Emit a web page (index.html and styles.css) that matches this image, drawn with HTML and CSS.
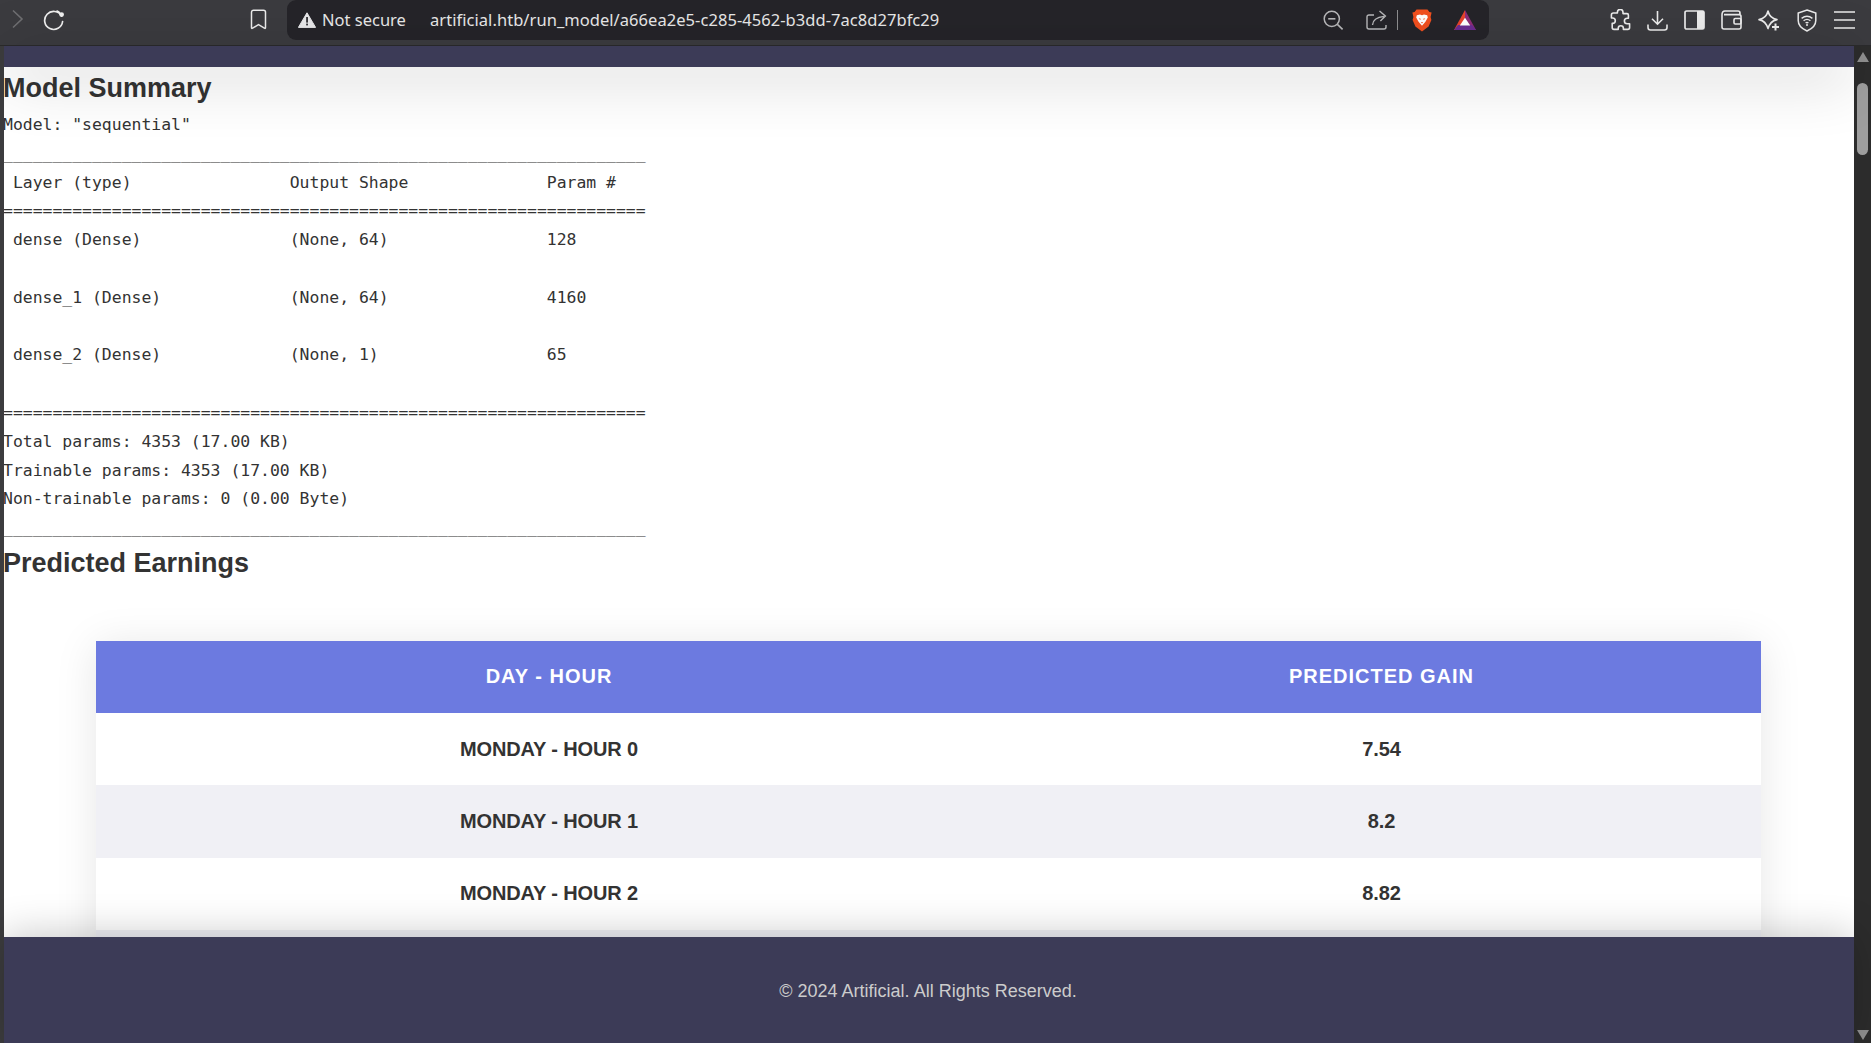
FILE: index.html
```html
<!DOCTYPE html>
<html lang="en">
<head>
<meta charset="utf-8">
<title>Artificial - Run Model</title>
<link rel="stylesheet" href="styles.css">
</head>
<body>
<div class="browser">
  <header class="toolbar">
    <div class="nav-buttons">
      <span class="tool-cell"><svg class="ico-fwd" width="14" height="20" viewBox="0 0 14 20"><path d="M2 1.5 L11 10 L2 18.5" fill="none" stroke="#6f6f72" stroke-width="1.6"/></svg></span>
      <span class="tool-cell"><svg width="24" height="24" viewBox="0 0 24 24"><path d="M19.6 9.2 A9 9 0 1 0 20.6 14.5" fill="none" stroke="#f0f0f0" stroke-width="1.7" stroke-linecap="round"/><path d="M14.5 3.8 A9 9 0 0 1 18 6" fill="none" stroke="#f0f0f0" stroke-width="1.7"/><circle cx="19.6" cy="7.6" r="2.4" fill="#f0f0f0"/></svg></span>
    </div>
    <span class="bookmark"><svg width="17" height="21" viewBox="0 0 17 21"><path d="M3.5 1.2 H13.5 A2 2 0 0 1 15.5 3.2 V18.6 Q15.5 19.8 14.4 19.2 L8.5 15.6 L2.6 19.2 Q1.5 19.8 1.5 18.6 V3.2 A2 2 0 0 1 3.5 1.2 Z" fill="none" stroke="#ececec" stroke-width="1.5"/></svg></span>
    <div class="urlbar">
      <svg class="warn" width="18" height="16" viewBox="0 0 18 16"><path d="M9 .8 L17.6 15.4 H.4 Z" fill="#e8e8ea" stroke="#e8e8ea" stroke-width="1" stroke-linejoin="round"/><rect x="8.2" y="5" width="1.7" height="5.6" fill="#252429"/><rect x="8.2" y="11.6" width="1.7" height="1.8" fill="#252429"/></svg>
      <span class="secure">Not secure</span>
      <span class="url">artificial.htb/run_model/a66ea2e5-c285-4562-b3dd-7ac8d27bfc29</span>
      <div class="url-icons">
        <svg class="u-zoom" width="21" height="20" viewBox="0 0 21 20"><circle cx="8.8" cy="8.8" r="7.6" fill="none" stroke="#b8b8ba" stroke-width="1.5"/><path d="M5.2 8.8 H12.4" stroke="#b8b8ba" stroke-width="1.6"/><path d="M14.4 14.4 L19.6 19.4" stroke="#b8b8ba" stroke-width="1.6"/></svg>
        <svg class="u-share" width="21" height="20" viewBox="0 0 21 20"><path d="M8 5 H3 Q1 5 1 7 V17 Q1 19 3 19 H18 Q20 19 20 17 V15" fill="none" stroke="#b8b8ba" stroke-width="1.4"/><path d="M6.5 15 Q7 7.5 18 6.4 M13.5 1 L19.4 6 L14.4 11" fill="none" stroke="#b8b8ba" stroke-width="1.4"/></svg>
        <span class="u-sep"></span>
        <svg class="u-brave" width="20" height="23" viewBox="0 0 20 23"><path d="M4.5 .6 H15.5 L17.4 3 L19.6 3.4 L18.6 8 L19.4 11 L16.6 17.6 L10 22.6 L3.4 17.6 L.6 11 L1.4 8 L.4 3.4 L2.6 3 Z" fill="#f1501f"/><path d="M4.8 6.2 L8 5.4 L10 6.2 L12 5.4 L15.2 6.2 L15.8 8.4 L13.6 12.4 L12.4 14 L10 16.8 L7.6 14 L6.4 12.4 L4.2 8.4 Z" fill="#fff"/><path d="M6.6 9.2 L8.8 9.8 L8.2 11 Z M13.4 9.2 L11.2 9.8 L11.8 11 Z M9 13 H11 L10 14.4 Z" fill="#f1501f"/></svg>
        <svg class="u-bat" width="22" height="20" viewBox="0 0 22 20"><path d="M11 0 L0 20 H5.4 L11 9.4 Z" fill="#e8432d"/><path d="M11 0 L22 20 H16.6 L11 9.4 Z" fill="#8f2c78"/><path d="M0 20 L4 15 H18 L22 20 Z" fill="#6a2c91"/><path d="M11 7.8 L16.2 15.6 H5.8 Z" fill="#fff"/></svg>
      </div>
    </div>
    <div class="extensions">
      <span class="tool-cell"><svg width="22" height="22" viewBox="0 0 22 22"><path d="M8.4 4 V3.2 A2.8 2.8 0 0 1 14 3.2 V4.6 H18 Q19.4 4.6 19.4 6 V9.2 H18.2 A2.8 2.8 0 0 0 18.2 14.8 H20.6 V18.6 Q20.6 20.4 18.8 20.4 H14.4 V19.4 A2.6 2.6 0 0 0 9.2 19.4 V20.4 H5 Q3.2 20.4 3.2 18.6 V14.4 H3.6 A2.7 2.7 0 0 0 3.6 9 H2.4 V6 Q2.4 4 4.4 4 Z" fill="none" stroke="#ececec" stroke-width="1.6" stroke-linejoin="round"/></svg></span>
      <span class="tool-cell"><svg width="21" height="21" viewBox="0 0 21 21"><path d="M10.5 1 V14 M5 8.8 L10.5 14.2 L16 8.8" fill="none" stroke="#ececec" stroke-width="1.6"/><path d="M1 14.5 V17.5 Q1 20 3.5 20 H17.5 Q20 20 20 17.5 V14.5" fill="none" stroke="#ececec" stroke-width="1.6"/></svg></span>
      <span class="tool-cell"><svg width="21" height="20" viewBox="0 0 21 20"><rect x="1" y="1" width="19" height="18" rx="1.6" fill="none" stroke="#ececec" stroke-width="1.7"/><rect x="13" y="1" width="7" height="18" fill="#ececec"/></svg></span>
      <span class="tool-cell"><svg width="21" height="20" viewBox="0 0 21 20"><path d="M1 5 Q1 1 4 1 H17 Q19 1 19 3 V4.5 M1 5 V17 Q1 19 3 19 H18 Q20 19 20 17 V6.5 Q20 4.6 18 4.6 H3" fill="none" stroke="#ececec" stroke-width="1.6"/><rect x="13" y="8.5" width="7" height="5.5" rx="1.2" fill="none" stroke="#ececec" stroke-width="1.6"/></svg></span>
      <span class="tool-cell"><svg width="22" height="21" viewBox="0 0 22 21"><path d="M10 1 C11.2 6.4 13.8 8.6 19 9.6 C13.8 10.6 11.6 13 10 18.6 C8.4 13 6.2 10.6 1 9.6 C6.2 8.6 8.8 6.4 10 1 Z" fill="none" stroke="#ececec" stroke-width="1.6" stroke-linejoin="round"/><path d="M17.5 13.5 V20.5 M14 17 H21" stroke="#ececec" stroke-width="2"/></svg></span>
      <span class="tool-cell"><svg width="20" height="23" viewBox="0 0 20 23"><path d="M10 1 L18.8 4 V11.6 Q18.8 18.4 10 22 Q1.2 18.4 1.2 11.6 V4 Z" fill="none" stroke="#ececec" stroke-width="1.5"/><path d="M4.6 9.4 Q10 5.2 15.4 9.4 M6.6 11.8 Q10 9 13.4 11.8 M8.6 14 Q10 12.8 11.4 14" fill="none" stroke="#ececec" stroke-width="1.4"/><circle cx="10" cy="16" r="1" fill="#ececec"/></svg></span>
      <span class="tool-cell"><svg width="21" height="18" viewBox="0 0 21 18"><path d="M0 1 H21 M0 9 H21 M0 17 H21" stroke="#ececec" stroke-width="1.7"/></svg></span>
    </div>
  </header>
  <div class="viewport">
    <div class="strip"></div>
    <div class="page">
      <nav class="site-nav"></nav>
      <main class="content">
        <h2 class="heading heading-first">Model Summary</h2>
        <pre class="summary">Model: "sequential"
_________________________________________________________________
 Layer (type)                Output Shape              Param #   
=================================================================
 dense (Dense)               (None, 64)                128       
                                                                 
 dense_1 (Dense)             (None, 64)                4160      
                                                                 
 dense_2 (Dense)             (None, 1)                 65        
                                                                 
=================================================================
Total params: 4353 (17.00 KB)
Trainable params: 4353 (17.00 KB)
Non-trainable params: 0 (0.00 Byte)
_________________________________________________________________</pre>
        <h2 class="heading">Predicted Earnings</h2>
        <table class="earnings">
          <colgroup><col class="col-day"><col class="col-gain"></colgroup>
          <thead>
            <tr><th>Day - Hour</th><th>Predicted Gain</th></tr>
          </thead>
          <tbody>
            <tr><td>Monday - Hour 0</td><td>7.54</td></tr>
            <tr><td>Monday - Hour 1</td><td>8.2</td></tr>
            <tr><td>Monday - Hour 2</td><td>8.82</td></tr>
            <tr><td></td><td></td></tr>
          </tbody>
        </table>
      </main>
      <footer class="site-footer">© 2024 Artificial. All Rights Reserved.</footer>
    </div>
    <aside class="scrollbar">
      <span class="arrow-up"></span>
      <span class="thumb"></span>
      <span class="arrow-down"></span>
    </aside>
  </div>
</div>
</body>
</html>
```

FILE: styles.css
```css
* { box-sizing: border-box; }
html, body { margin: 0; height: 100%; overflow: hidden; }
body { font-family: "Liberation Sans", Arial, sans-serif; color: #333; background: #fff; }
.browser { display: flex; flex-direction: column; height: 1043px; }

.toolbar { flex: 0 0 46px; display: flex; align-items: flex-start; background: #3b3b3f; border-bottom: 1px solid #2a2a2c; }
.nav-buttons { display: flex; width: 72px; }
.tool-cell { flex: 0 0 37.4px; height: 38px; display: flex; align-items: center; justify-content: center; }
.nav-buttons .tool-cell { flex-basis: 36px; }
.bookmark { width: 17px; height: 21px; margin: 9px 0 0 178px; }
.urlbar { width: 1202px; height: 40px; margin-left: 20px; padding: 0 0 0 11px; display: flex; align-items: center; background: #252429; border-radius: 9px; color: #e8e8e8; font-family: "Noto Sans", sans-serif; font-size: 16.5px; }
.warn { flex: none; }
.secure { margin-left: 6px; width: 108px; white-space: nowrap; padding-bottom: 2px; }
.url { white-space: nowrap; letter-spacing: .05px; padding-bottom: 2px; }
.url-icons { margin-left: auto; display: flex; align-items: center; padding-right: 13px; }
.u-share { margin-left: 22px; }
.u-sep { width: 1px; height: 20px; background: #8e8e90; margin-left: 10px; }
.u-brave { margin-left: 14px; }
.u-bat { margin-left: 22px; }
.extensions { display: flex; margin-left: 112px; margin-top: 1px; }

.viewport { flex: 1; display: flex; min-height: 0; }
.strip { flex: 0 0 4px; background: #3c3c3e; }
.page { flex: 1; min-width: 0; display: flex; flex-direction: column; background: #fff; }
.site-nav { flex: 0 0 21px; background: #3c3b57; position: relative; z-index: 2; box-shadow: 0 10px 60px rgba(0,0,0,.24); }
.content { flex: 1; min-height: 0; overflow: hidden; }
.heading { margin: 0 0 0 -1px; font-size: 27px; line-height: 42px; font-weight: 700; color: #333; }
.heading-first { margin-bottom: 2px; }
.summary { margin: 0 0 0 -1px; font-family: "DejaVu Sans Mono", monospace; font-size: 16.43px; line-height: 28.8px; color: #333; height: 431px; }

.earnings { width: 1665px; margin: 57px auto 0 92px; border-collapse: collapse; table-layout: fixed; box-shadow: 0 4px 40px rgba(0,0,0,.1); background: #fff; }
.col-day { width: 906px; }
.col-gain { width: 759px; }
.earnings th { height: 72px; padding: 0 0 2px; background: #6c7ae0; color: #fff; font-size: 20px; font-weight: 700; text-transform: uppercase; letter-spacing: 1px; text-align: center; }
.earnings td { height: 72.3px; padding: 0; font-size: 20px; font-weight: 700; text-transform: uppercase; letter-spacing: -.13px; text-align: center; color: #333; }
.earnings tbody tr:nth-child(even) { background: #f0f0f5; }

.site-footer { flex: 0 0 106px; position: relative; z-index: 2; display: flex; align-items: center; justify-content: center; padding: 2px 2px 0 0; background: #3c3b57; color: #ccc; font-size: 18px; box-shadow: 0 -2px 40px rgba(0,0,0,.22); }

.scrollbar { flex: 0 0 17px; position: relative; background: #2c2c2c; }
.arrow-up, .arrow-down { position: absolute; left: 3px; width: 0; height: 0; border-left: 6px solid transparent; border-right: 6px solid transparent; }
.arrow-up { top: 6px; border-bottom: 10px solid #8f8f8f; }
.arrow-down { bottom: 3px; border-top: 10px solid #8f8f8f; }
.thumb { position: absolute; left: 3px; top: 37px; width: 11px; height: 72px; border-radius: 6px; background: #9e9e9e; }
```
